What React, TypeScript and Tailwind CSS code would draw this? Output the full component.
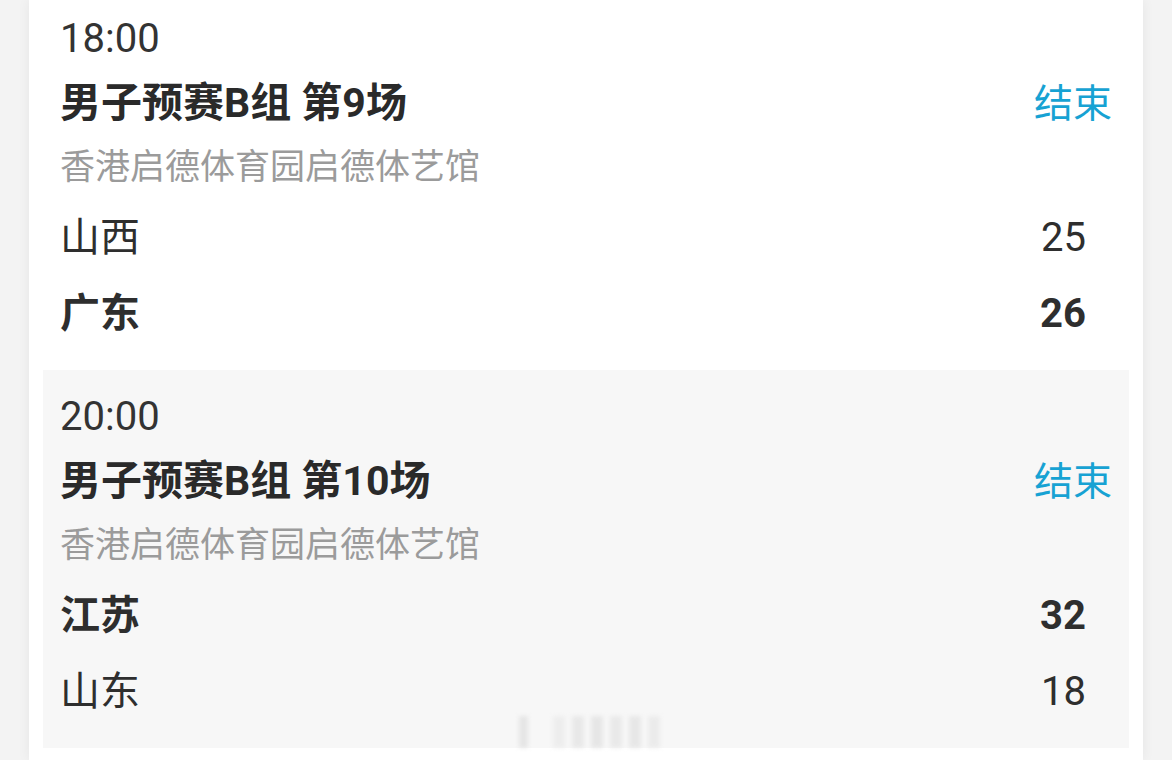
const matches = [
  {
    time: '18:00',
    title: '男子预赛B组 第9场',
    venue: '香港启德体育园启德体艺馆',
    status: '结束',
    teams: [
      { name: '山西', score: 25, win: false },
      { name: '广东', score: 26, win: true },
    ],
    shaded: false,
  },
  {
    time: '20:00',
    title: '男子预赛B组 第10场',
    venue: '香港启德体育园启德体艺馆',
    status: '结束',
    teams: [
      { name: '江苏', score: 32, win: true },
      { name: '山东', score: 18, win: false },
    ],
    shaded: true,
  },
]

const font = { fontFamily: 'Roboto, "Noto Sans CJK SC", sans-serif' }

function MatchCard({ m }: { m: (typeof matches)[number] }) {
  return (
    <div className={`px-[17px] pt-[15px] pb-[18px] ${m.shaded ? 'bg-[#f7f7f7]' : 'bg-white'}`}>
      <div className="h-[64px] flex items-center text-[40px] text-[#333]">{m.time}</div>
      <div className="h-[66px] flex items-center justify-between">
        <span className="text-[41px] font-bold text-[#2a2a2a]">{m.title}</span>
        <span className="text-[39px] text-[#17a2d3]">{m.status}</span>
      </div>
      <div className="h-[63px] flex items-center text-[35px] text-[#9b9b9b]">{m.venue}</div>
      {m.teams.map((t) => (
        <div
          key={t.name}
          className={`h-[76px] flex items-center justify-between text-[40px] text-[#2e2e2e] ${t.win ? 'font-bold' : ''}`}
        >
          <span>{t.name}</span>
          <span className="mr-[26px]">{t.score}</span>
        </div>
      ))}
    </div>
  )
}

export default function App() {
  return (
    <div className="h-[760px] overflow-hidden bg-[#f3f3f3] flex" style={font}>
      <div className="ml-[29px] w-[1114px] bg-white shadow-[0_0_12px_rgba(0,0,0,0.06)] relative">
        {/* list, scrolled a little */}
        <div className="-mt-[8px] px-[14px]">
          {matches.map((m) => (
            <MatchCard key={m.time} m={m} />
          ))}
        </div>

        {/* blurred watermark */}
        <div className="absolute left-[490px] top-[716px] flex gap-[7px] blur-[2px] opacity-50">
          <div className="w-[9px] h-[32px] bg-[#d4d4d4]" />
          <div className="w-[12px] h-[32px] bg-[#e4e4e4] ml-[18px]" />
          <div className="w-[12px] h-[32px] bg-[#dadada]" />
          <div className="w-[12px] h-[32px] bg-[#d6d6d6]" />
          <div className="w-[12px] h-[32px] bg-[#dcdcdc]" />
          <div className="w-[12px] h-[32px] bg-[#d8d8d8]" />
          <div className="w-[12px] h-[32px] bg-[#e0e0e0]" />
        </div>
      </div>
    </div>
  )
}
